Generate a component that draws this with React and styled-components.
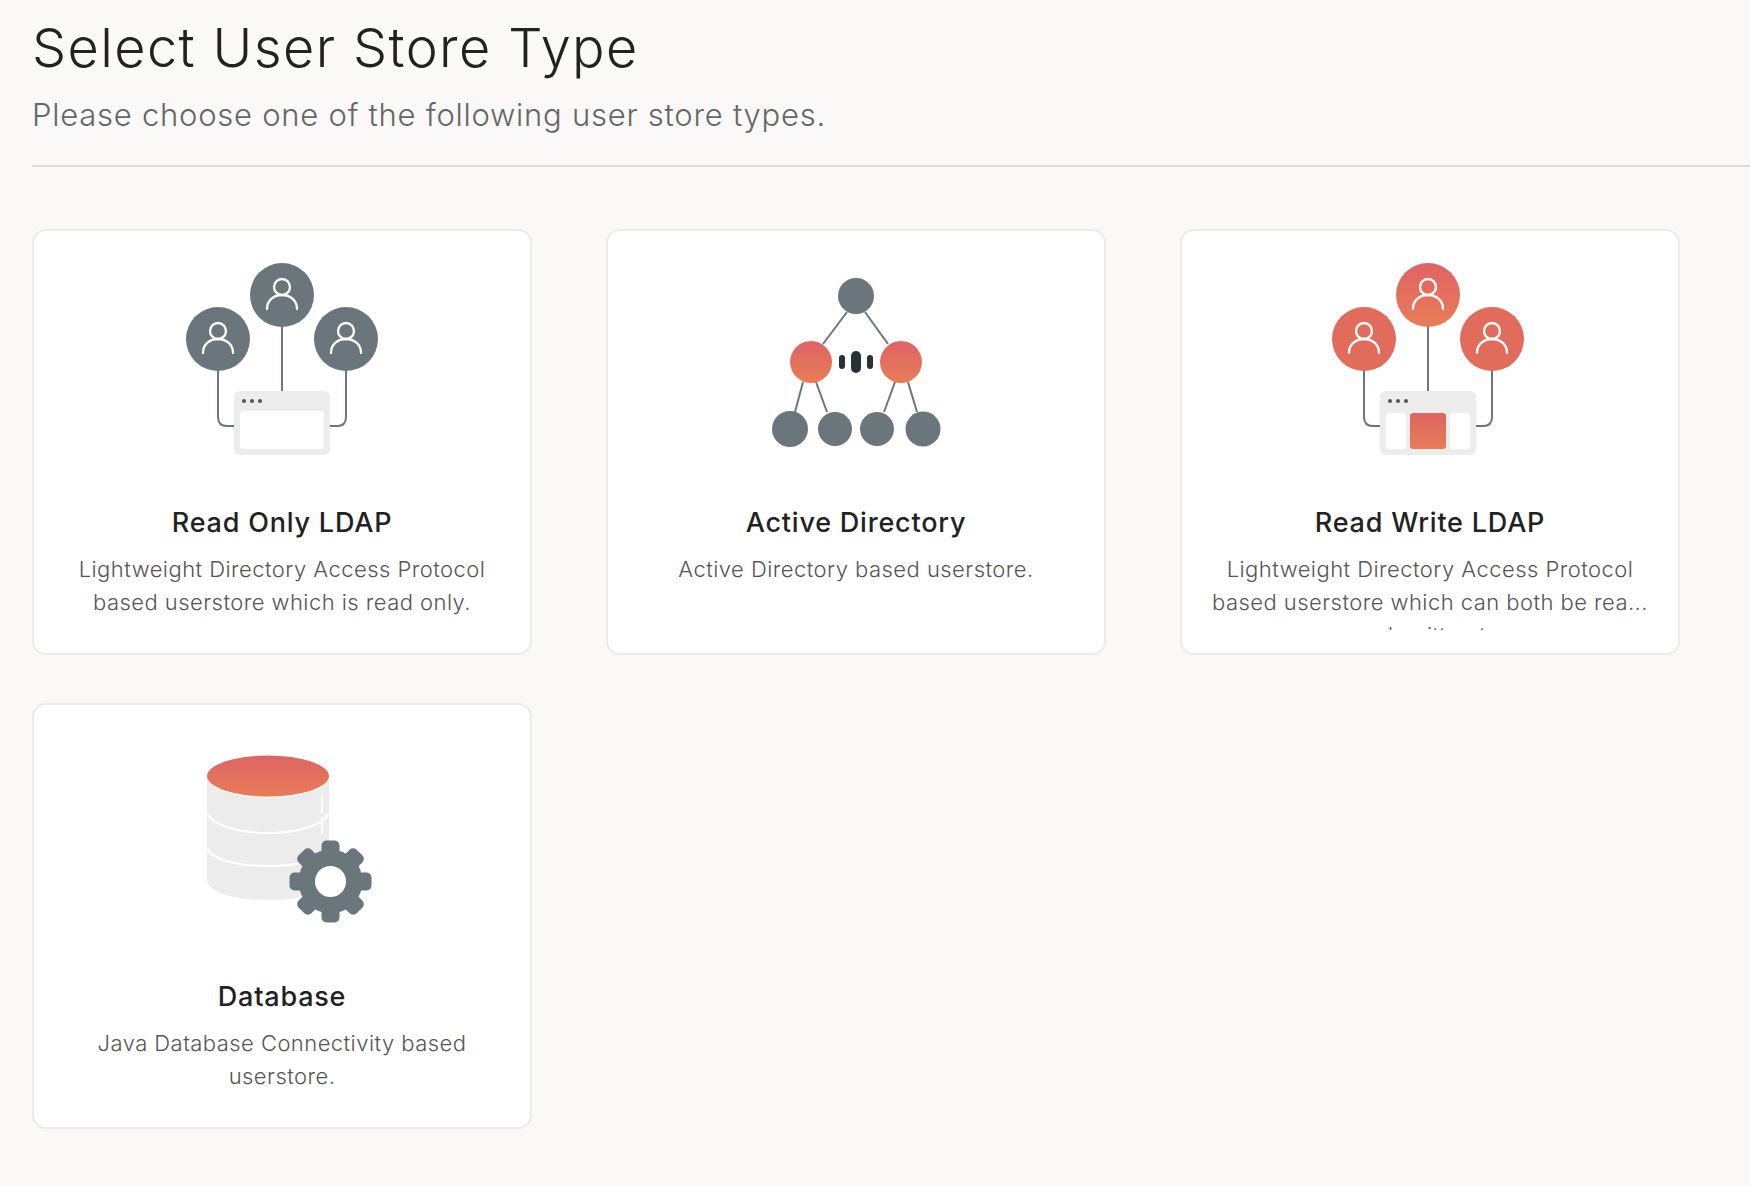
import React from 'react'
import styled, { createGlobalStyle } from 'styled-components'

const SLATE = '#6a767c'
const LIGHT = '#ececec'
const CORAL = '#e26c5c'

const GlobalStyle = createGlobalStyle`
    html, body {
        margin: 0;
        padding: 0;
        background: #faf9f7;
        overflow: hidden;
    }
    * {
        box-sizing: border-box;
    }
`

const UserGlyph = ({ x, y }) => (
    <g transform={`translate(${x} ${y})`} fill="none" stroke="#fff" strokeWidth="2.3" strokeLinecap="round">
        <circle cx="0" cy="-7" r="8" />
        <path d="M-15 15 C-15 6 -8 1 0 1 C8 1 15 6 15 15" />
    </g>
)

const WindowFrame = ({ children }) => (
    <g>
        <rect x="-48" y="146" width="96" height="64" rx="6" fill={LIGHT} />
        <circle cx="-38" cy="156" r="2" fill="#555" />
        <circle cx="-30" cy="156" r="2" fill="#555" />
        <circle cx="-22" cy="156" r="2" fill="#555" />
        {children}
    </g>
)

const Links = () => (
    <g fill="none" stroke={SLATE} strokeWidth="2">
        <path d="M0 80V146" />
        <path d="M-64 124V172Q-64 181 -55 181H-48" />
        <path d="M64 124V172Q64 181 55 181H48" />
    </g>
)

const ReadOnlyIcon = () => (
    <Illustration viewBox="-120 0 240 220">
        <Links />
        <circle cx="0" cy="50" r="32" fill={SLATE} />
        <circle cx="-64" cy="94" r="32" fill={SLATE} />
        <circle cx="64" cy="94" r="32" fill={SLATE} />
        <UserGlyph x={0} y={49} />
        <UserGlyph x={-64} y={93} />
        <UserGlyph x={64} y={93} />
        <WindowFrame>
            <rect x="-42" y="166" width="84" height="38" rx="3" fill="#fff" />
        </WindowFrame>
    </Illustration>
)

const DirectoryIcon = () => (
    <Illustration viewBox="-120 0 240 220">
        <defs>
            <linearGradient id="coralA" x1="0" y1="0" x2="0" y2="1">
                <stop offset="0" stopColor="#e06363" />
                <stop offset="1" stopColor="#e77d58" />
            </linearGradient>
        </defs>
        <g stroke={SLATE} strokeWidth="2">
            <line x1="-9" y1="67" x2="-33" y2="99" />
            <line x1="9" y1="67" x2="32" y2="99" />
            <line x1="-53" y1="137" x2="-61" y2="167" />
            <line x1="-40" y1="137" x2="-29" y2="167" />
            <line x1="39" y1="137" x2="28" y2="167" />
            <line x1="52" y1="137" x2="61" y2="167" />
        </g>
        <circle cx="0" cy="51" r="18" fill={SLATE} />
        <circle cx="-45" cy="117" r="21" fill="url(#coralA)" />
        <circle cx="45" cy="117" r="21" fill="url(#coralA)" />
        <rect x="-17" y="110" width="6" height="14" rx="3" fill="#263238" />
        <rect x="-5" y="106" width="10" height="22" rx="5" fill="#263238" />
        <rect x="11" y="110" width="6" height="14" rx="3" fill="#263238" />
        <circle cx="-66" cy="184" r="18" fill={SLATE} />
        <circle cx="-21" cy="184" r="17" fill={SLATE} />
        <circle cx="21" cy="184" r="17" fill={SLATE} />
        <circle cx="67" cy="184" r="17.5" fill={SLATE} />
    </Illustration>
)

const ReadWriteIcon = () => (
    <Illustration viewBox="-118 0 240 220">
        <defs>
            <linearGradient id="coralB" x1="0" y1="0" x2="0" y2="1">
                <stop offset="0" stopColor="#e06363" />
                <stop offset="1" stopColor="#e77d58" />
            </linearGradient>
        </defs>
        <Links />
        <circle cx="0" cy="50" r="32" fill="url(#coralB)" />
        <circle cx="-64" cy="94" r="32" fill={CORAL} />
        <circle cx="64" cy="94" r="32" fill={CORAL} />
        <UserGlyph x={0} y={49} />
        <UserGlyph x={-64} y={93} />
        <UserGlyph x={64} y={93} />
        <WindowFrame>
            <rect x="-42" y="168" width="20" height="36" rx="3" fill="#fff" />
            <rect x="22" y="168" width="20" height="36" rx="3" fill="#fff" />
            <rect x="-18" y="168" width="36" height="36" rx="3" fill="url(#coralB)" />
        </WindowFrame>
    </Illustration>
)

const GEAR_TEETH = [0, 45, 90, 135, 180, 225, 270, 315]

const DatabaseIcon = () => (
    <Illustration viewBox="-120 0 240 220">
        <defs>
            <linearGradient id="coralC" x1="0" y1="0" x2="0" y2="1">
                <stop offset="0" stopColor="#e06363" />
                <stop offset="1" stopColor="#e77d58" />
            </linearGradient>
        </defs>
        <path d="M-75 58V161C-75 173 -48 181 -14 181C20 181 47 173 47 161V58Z" fill={LIGHT} />
        <g fill="none" stroke="#fff" strokeWidth="2">
            <path d="M-75 94C-70 106 -44 114 -14 114C16 114 42 106 47 94" />
            <path d="M-75 129C-70 141 -44 147 -14 147C16 147 42 141 47 129" />
            <path d="M40 75V94M40 98V116" />
        </g>
        <ellipse cx="-14" cy="57.5" rx="61" ry="21" fill="#fff" />
        <ellipse cx="-14" cy="57" rx="61" ry="20.5" fill="url(#coralC)" />
        <g transform="translate(48.5 162.5)" fill={SLATE}>
            <circle r="32" />
            {GEAR_TEETH.map(angle => (
                <rect key={angle} x="-9" y="-41" width="18" height="20" rx="5" transform={`rotate(${angle})`} />
            ))}
            <circle r="15.5" fill="#fff" />
        </g>
    </Illustration>
)

const STORE_TYPES = [
    {
        title: 'Read Only LDAP',
        icon: <ReadOnlyIcon />,
        lines: ['Lightweight Directory Access Protocol', 'based userstore which is read only.'],
    },
    {
        title: 'Active Directory',
        icon: <DirectoryIcon />,
        lines: ['Active Directory based userstore.'],
    },
    {
        title: 'Read Write LDAP',
        icon: <ReadWriteIcon />,
        lines: ['Lightweight Directory Access Protocol', 'based userstore which can both be rea...', 'and written to.'],
    },
    {
        title: 'Database',
        icon: <DatabaseIcon />,
        lines: ['Java Database Connectivity based', 'userstore.'],
    },
]

const App = () => {
    return (
        <Page>
            <GlobalStyle />
            <Header>
                <Heading>Select User Store Type</Heading>
                <Subheading>Please choose one of the following user store types.</Subheading>
            </Header>
            <CardGrid>
                {
                    STORE_TYPES.map(type => (
                        <Card key={type.title}>
                            {type.icon}
                            <CardTitle>{type.title}</CardTitle>
                            <CardText>
                                {
                                    type.lines.map(line => (
                                        <CardLine key={line}>{line}</CardLine>
                                    ))
                                }
                            </CardText>
                        </Card>
                    ))
                }
            </CardGrid>
        </Page>
    );
}

export default App;

// STYLES
const Page = styled.div`
    width: 1750px;
    height: 1186px;
    padding-left: 32px;
    background: #faf9f7;
    font-family: 'Inter', 'Noto Sans', sans-serif;
`

const Header = styled.header`
    height: 167px;
    padding-top: 17px;
    border-bottom: 2px solid #dcdcda;
`

const Heading = styled.h1`
    margin: 0;
    font-size: 54px;
    font-weight: 300;
    line-height: 62px;
    letter-spacing: 1.4px;
    color: #222;
`

const Subheading = styled.p`
    margin: 16px 0 0;
    font-size: 31px;
    font-weight: 300;
    line-height: 40px;
    letter-spacing: 0.75px;
    color: #666;
`

const CardGrid = styled.div`
    display: grid;
    grid-template-columns: repeat(3, 500px);
    grid-auto-rows: 426px;
    column-gap: 74px;
    row-gap: 48px;
    margin-top: 62px;
`

const Card = styled.div`
    padding-top: 14px;
    background: #fff;
    border: 2px solid #ebebe9;
    border-radius: 14px;
    text-align: center;
`

const Illustration = styled.svg`
    display: block;
    width: 240px;
    height: 220px;
    margin: 0 auto 41px;
`

const CardTitle = styled.h3`
    margin: 0;
    font-size: 27px;
    font-weight: 500;
    line-height: 34px;
    letter-spacing: 0.8px;
    color: #222;
`

const CardText = styled.div`
    max-height: 77px;
    margin-top: 13px;
    overflow: hidden;
    font-size: 22px;
    font-weight: 300;
    line-height: 33px;
    letter-spacing: 0.45px;
    color: #555;
`

const CardLine = styled.div`
    white-space: nowrap;
`
